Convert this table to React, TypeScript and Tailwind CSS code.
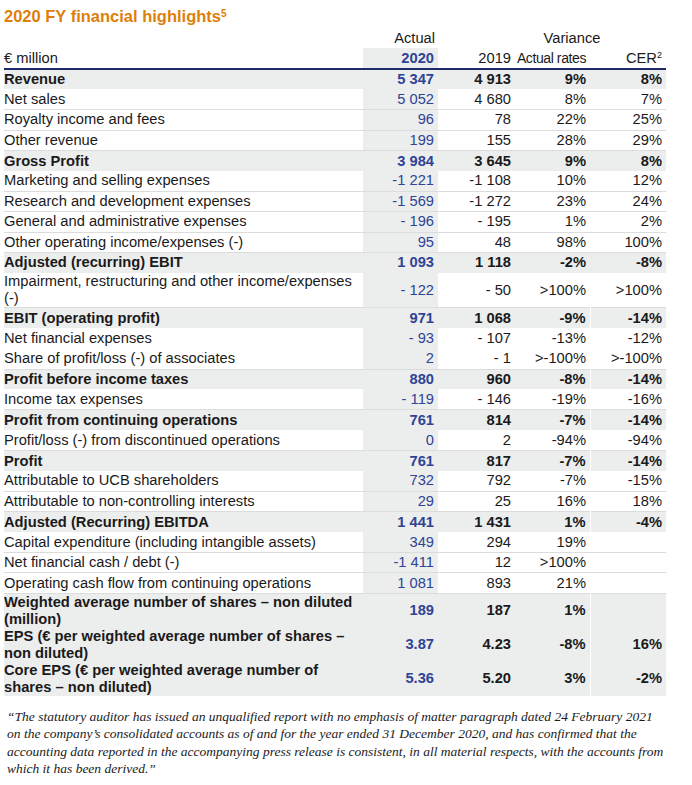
type Row = {
  label: string;
  a: string;
  b: string;
  c: string;
  d: string;
  bold?: boolean;
  tall?: boolean;
  split?: boolean;
  noLine?: boolean;
};

const rows: Row[] = [
  { label: "Revenue", a: "5 347", b: "4 913", c: "9%", d: "8%", bold: true },
  { label: "Net sales", a: "5 052", b: "4 680", c: "8%", d: "7%" },
  { label: "Royalty income and fees", a: "96", b: "78", c: "22%", d: "25%" },
  { label: "Other revenue", a: "199", b: "155", c: "28%", d: "29%" },
  { label: "Gross Profit", a: "3 984", b: "3 645", c: "9%", d: "8%", bold: true },
  { label: "Marketing and selling expenses", a: "-1 221", b: "-1 108", c: "10%", d: "12%" },
  { label: "Research and development expenses", a: "-1 569", b: "-1 272", c: "23%", d: "24%" },
  { label: "General and administrative expenses", a: "- 196", b: "- 195", c: "1%", d: "2%" },
  { label: "Other operating income/expenses (-)", a: "95", b: "48", c: "98%", d: "100%" },
  { label: "Adjusted (recurring) EBIT", a: "1 093", b: "1 118", c: "-2%", d: "-8%", bold: true },
  {
    label: "Impairment, restructuring and other income/expenses (-)",
    a: "- 122",
    b: "- 50",
    c: ">100%",
    d: ">100%",
    tall: true,
  },
  { label: "EBIT (operating profit)", a: "971", b: "1 068", c: "-9%", d: "-14%", bold: true, split: true },
  { label: "Net financial expenses", a: "- 93", b: "- 107", c: "-13%", d: "-12%", noLine: true },
  { label: "Share of profit/loss (-) of associates", a: "2", b: "- 1", c: ">-100%", d: ">-100%" },
  { label: "Profit before income taxes", a: "880", b: "960", c: "-8%", d: "-14%", bold: true, split: true },
  { label: "Income tax expenses", a: "- 119", b: "- 146", c: "-19%", d: "-16%" },
  { label: "Profit from continuing operations", a: "761", b: "814", c: "-7%", d: "-14%", bold: true, split: true },
  { label: "Profit/loss (-) from discontinued operations", a: "0", b: "2", c: "-94%", d: "-94%" },
  { label: "Profit", a: "761", b: "817", c: "-7%", d: "-14%", bold: true, split: true },
  { label: "Attributable to UCB shareholders", a: "732", b: "792", c: "-7%", d: "-15%" },
  { label: "Attributable to non-controlling interests", a: "29", b: "25", c: "16%", d: "18%" },
  { label: "Adjusted (Recurring) EBITDA", a: "1 441", b: "1 431", c: "1%", d: "-4%", bold: true, split: true },
  { label: "Capital expenditure (including intangible assets)", a: "349", b: "294", c: "19%", d: "" },
  { label: "Net financial cash / debt (-)", a: "-1 411", b: "12", c: ">100%", d: "" },
  { label: "Operating cash flow from continuing operations", a: "1 081", b: "893", c: "21%", d: "" },
  {
    label: "Weighted average number of shares – non diluted (million)",
    a: "189",
    b: "187",
    c: "1%",
    d: "",
    bold: true,
    split: true,
    tall: true,
  },
  {
    label: "EPS (€ per weighted average number of shares – non diluted)",
    a: "3.87",
    b: "4.23",
    c: "-8%",
    d: "16%",
    bold: true,
    split: true,
    tall: true,
  },
  {
    label: "Core EPS (€ per weighted average number of shares – non diluted)",
    a: "5.36",
    b: "5.20",
    c: "3%",
    d: "-2%",
    bold: true,
    split: true,
    tall: true,
  },
];

export default function App() {
  return (
    <div className="w-[692px] bg-white px-[4px] pt-[6px] font-['Liberation_Sans',Arial,sans-serif] text-[#1a1a1a]">
      <h1 className="text-[16.5px] font-bold leading-[20px] text-[#DE7F0C]">
        2020 FY financial highlights<sup className="text-[10px]">5</sup>
      </h1>

      <table className="mt-[3px] w-[662px] table-fixed border-collapse text-[14.7px] leading-[17px]">
        <colgroup>
          <col className="w-[359px]" />
          <col className="w-[75px]" />
          <col className="w-[77px]" />
          <col className="w-[75px]" />
          <col className="w-[76px]" />
        </colgroup>
        <thead>
          <tr className="h-[19px]">
            <th></th>
            <th className="pr-[3px] text-right font-normal">Actual</th>
            <th colSpan={3} className="pl-[40px] text-center font-normal">
              Variance
            </th>
          </tr>
          <tr className="h-[21px] border-b-2 border-[#1F2A6B] whitespace-nowrap">
            <th className="text-left font-normal">€ million</th>
            <th className="bg-[#ECEDED] pr-[4px] text-right font-bold text-[#2E4496]">2020</th>
            <th className="pr-[4px] text-right font-normal">2019</th>
            <th className="pr-[4px] text-right text-[14px] font-normal tracking-[-0.4px]">Actual rates</th>
            <th className="pr-[4px] text-right font-normal">
              CER<sup className="text-[9px]">2</sup>
            </th>
          </tr>
        </thead>
        <tbody>
          {rows.map((r) => (
            <tr
              key={r.label}
              className={
                (r.bold ? "bg-[#ECEDED] font-bold " : "border-b border-[#DCDCDC] ") +
                (r.noLine ? "border-b-0 " : "") +
                (r.tall ? (r.bold ? "h-[33.5px]" : "h-[35px]") : "h-[20.4px]")
              }
            >
              <td className="pr-[4px] align-middle">{r.label}</td>
              <td className="bg-[#ECEDED] pr-[4px] text-right text-[#2E4496]">{r.a}</td>
              <td className="pr-[4px] text-right">{r.b}</td>
              <td className="whitespace-nowrap pr-[4px] text-right">{r.c}</td>
              <td className={"whitespace-nowrap pr-[4px] text-right " + (r.split ? "border-l border-white" : "")}>{r.d}</td>
            </tr>
          ))}
        </tbody>
      </table>

      <div className="mt-[12px] pl-[3px] font-['Liberation_Serif',serif] text-[13.5px] italic leading-[17.5px] text-[#1a1a1a]">
        <div className="whitespace-nowrap">
          “The statutory auditor has issued an unqualified report with no emphasis of matter paragraph dated 24 February 2021
        </div>
        <div className="whitespace-nowrap">
          on the company’s consolidated accounts as of and for the year ended 31 December 2020, and has confirmed that the
        </div>
        <div className="whitespace-nowrap">
          accounting data reported in the accompanying press release is consistent, in all material respects, with the accounts from
        </div>
        <div className="whitespace-nowrap">which it has been derived.”</div>
      </div>
    </div>
  );
}
